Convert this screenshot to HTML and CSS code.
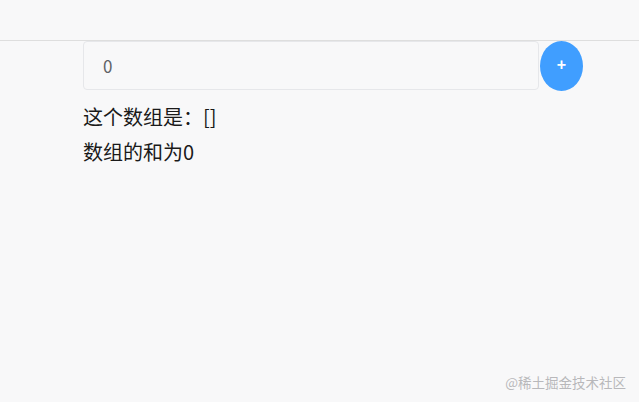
FILE: index.html
```html
<!DOCTYPE html>
<html lang="zh-CN">
<head>
<meta charset="utf-8">
<title>数组求和</title>
<link rel="stylesheet" href="styles.css">
</head>
<body>
<header class="topbar"></header>
<main class="content">
  <div class="input-row">
    <div class="input-box"><span class="input-value">0</span></div>
    <button class="add-btn" type="button">+</button>
  </div>
  <p class="line">这个数组是：[]</p>
  <p class="line">数组的和为0</p>
</main>
<div class="watermark">@稀土掘金技术社区</div>
</body>
</html>
```

FILE: styles.css
```css
html, body {
  margin: 0;
  padding: 0;
}
body {
  width: 639px;
  height: 402px;
  background: #f8f8f9;
  font-family: "Noto Sans CJK SC", "Noto Sans", sans-serif;
  color: #1a1a1a;
  position: relative;
  overflow: hidden;
}
.topbar {
  height: 41px;
  border-bottom: 1px solid #dedede;
  box-sizing: border-box;
}
.content {
  padding-left: 83px;
}
.input-row {
  display: flex;
  align-items: flex-start;
}
.input-box {
  width: 456px;
  height: 49px;
  box-sizing: border-box;
  border: 1px solid #e6e7ea;
  border-radius: 4px;
  background: #f8f8f9;
  display: flex;
  align-items: center;
  padding-left: 19px;
}
.input-value {
  font-size: 17px;
  color: #606266;
}
.add-btn {
  width: 43px;
  height: 50px;
  margin: 0 0 0 1px;
  padding: 0 0 2px 0;
  border: none;
  border-radius: 50%;
  background: #409eff;
  color: #ffffff;
  font-family: "Liberation Sans", sans-serif;
  font-size: 16px;
  font-weight: bold;
  line-height: 1;
}
.line {
  margin: 0;
  font-size: 20px;
  line-height: 35px;
}
.input-row + .line {
  margin-top: 8px;
}
.watermark {
  position: absolute;
  right: 13px;
  bottom: 10px;
  font-size: 13.5px;
  color: #b8b8bb;
}
```
